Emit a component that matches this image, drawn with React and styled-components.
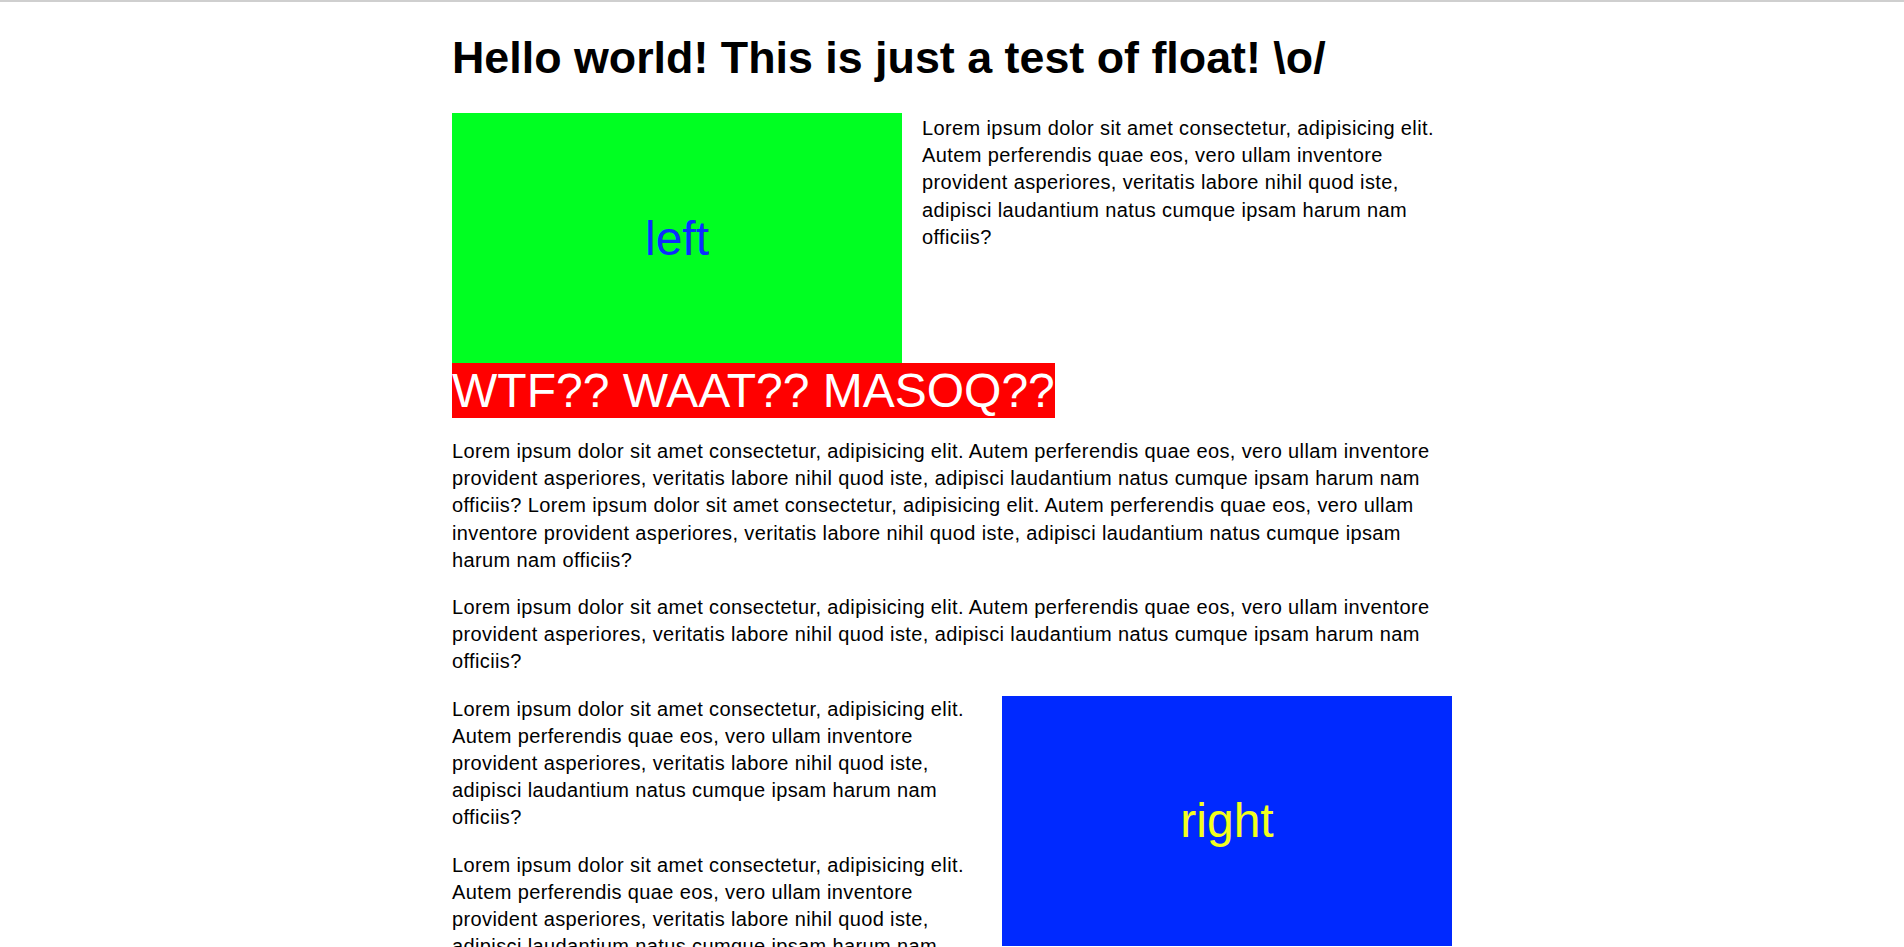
import React from "react";
import styled, { createGlobalStyle } from "styled-components";

const GlobalStyle = createGlobalStyle`
  html {
    border-top: 2px solid #cfcfcf;
  }
  body {
    margin: 0;
    background: #fff;
    color: #000;
    font-family: "Liberation Sans", Arial, sans-serif;
  }
`;

const Page = styled.main`
  max-width: 1000px;
  margin: 0 auto;
`;

const Title = styled.h1`
  font-size: 44.8px;
  font-weight: bold;
  margin: 30px 0;
`;

const FloatBox = styled.div`
  float: ${(p) => p.$side};
  width: 450px;
  height: 250px;
  display: flex;
  align-items: center;
  justify-content: center;
  font-size: 48px;
  background: ${(p) => p.$bg};
  color: ${(p) => p.$fg};
  margin-${(p) => (p.$side === "left" ? "right" : "left")}: 20px;
`;

const Text = styled.p`
  font-size: 20px;
  line-height: 27.2px;
  letter-spacing: 0.38px;
  margin: 20px 0;

  &.first {
    margin-top: 0;
    padding-top: 2px;
  }
`;

const Banner = styled.div`
  clear: left;
  display: table;
  background: #ff0000;
  color: #fff;
  font-size: 48px;
`;

const lorem =
  "Lorem ipsum dolor sit amet consectetur, adipisicing elit. Autem perferendis quae eos, vero ullam inventore provident asperiores, veritatis labore nihil quod iste, adipisci laudantium natus cumque ipsam harum nam officiis?";

export default function App() {
  return (
    <>
      <GlobalStyle />
      <Page>
        <Title>Hello world! This is just a test of float! \o/</Title>
        <FloatBox $side="left" $bg="#00ff22" $fg="#0a2cff">
          left
        </FloatBox>
        <Text className="first">{lorem}</Text>
        <Banner>WTF?? WAAT?? MASOQ??</Banner>
        <Text>
          {lorem} {lorem}
        </Text>
        <Text>{lorem}</Text>
        <FloatBox $side="right" $bg="#0029ff" $fg="#f2ff1e">
          right
        </FloatBox>
        <Text>{lorem}</Text>
        <Text>{lorem}</Text>
        <Text>{lorem}</Text>
      </Page>
    </>
  );
}
